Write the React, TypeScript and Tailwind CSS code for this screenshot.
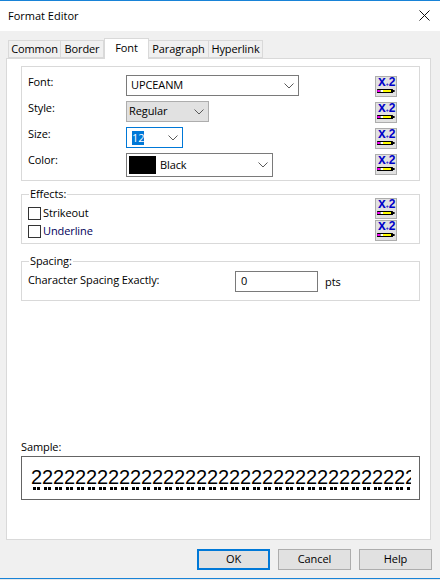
const F = "font-['Open_Sans','Noto_Sans',sans-serif]";

function Chevron() {
  return (
    <svg width="10" height="6" viewBox="0 0 10 6" fill="none" className="shrink-0">
      <path d="M0.5 0.5L5 5L9.5 0.5" stroke="#5a5a5a" strokeWidth="1" />
    </svg>
  );
}

function XBtn() {
  return (
    <div className="w-[22px] h-[21px] border border-[#adadad] bg-[#e1e1e1] shrink-0 flex flex-col">
      <div className="h-[11px] pl-[2px] flex items-baseline font-['Liberation_Sans',sans-serif] font-bold text-[#0000c8] leading-[9px] tracking-normal">
        <span className="text-[14px]">x</span>
        <span className="text-[5px]">+</span>
        <span className="text-[12px]">2</span>
      </div>
      <svg width="20" height="8" viewBox="0 11 20 8" className="shrink-0">
        <rect x="1" y="12" width="16" height="4" rx="0.5" fill="#000" />
        <rect x="1.3" y="13" width="2.6" height="2" fill="#ff00ff" />
        <rect x="4.4" y="13" width="2.6" height="2" fill="#ffffff" />
        <rect x="7" y="13" width="8" height="2" fill="#ffff00" />
        <rect x="17" y="13" width="1.6" height="2" fill="#000" />
      </svg>
    </div>
  );
}

function Row({ label, children }: { label: string; children: React.ReactNode }) {
  return (
    <div className="flex items-start h-[26px]">
      <div className="w-[98px] leading-[14px]">{label}</div>
      <div className="flex-1">{children}</div>
      <div className="w-[22px] mr-[22px] mt-[1px]"><XBtn /></div>
    </div>
  );
}

export default function App() {
  return (
    <div className={`${F} w-[440px] h-[580px] overflow-hidden bg-[#e8e8e8] flex flex-col text-black text-[11px] tracking-[-0.1px]`}>
      <div className="h-[31px] bg-white border-t border-[#1883d7] flex items-center justify-between pl-[8px] pr-[4px] shrink-0">
        <span className="tracking-normal">Format Editor</span>
        <svg width="20" height="20" viewBox="0 0 20 20" fill="none" className="mr-[1px]">
          <path d="M4.5 4.5L14.5 14.5M14.5 4.5L4.5 14.5" stroke="#111" strokeWidth="1" />
        </svg>
      </div>

      <div className="flex-1 flex flex-col bg-[#f0f0f0] border-b border-[#1883d7] mb-[1px] pl-[6px]">
        <div className="flex items-end h-[27px] pl-[2px] relative z-10 shrink-0">
          <div className="h-[18px] w-[53px] border border-[#d9d9d9] bg-[#f0f0f0] flex items-center justify-center">Common</div>
          <div className="h-[18px] w-[43px] border border-l-0 border-[#d9d9d9] bg-[#f0f0f0] flex items-center justify-center">Border</div>
          <div className="h-[21px] w-[45px] border border-b-0 border-[#d9d9d9] bg-white flex items-center justify-center pb-[1px] mb-[-1px]">Font</div>
          <div className="h-[18px] w-[60px] border border-l-0 border-[#d9d9d9] bg-[#f0f0f0] flex items-center justify-center">Paragraph</div>
          <div className="h-[18px] w-[54px] border border-l-0 border-[#d9d9d9] bg-[#f0f0f0] flex items-center justify-center">Hyperlink</div>
        </div>

        <div className="w-[425px] h-[482px] bg-white border border-[#d9d9d9] pl-[14px] pt-[7px] flex flex-col shrink-0">
          <div className="w-[399px] h-[115px] border border-[#d9d9d9] pl-[6px] pt-[8px] flex flex-col shrink-0">
            <Row label="Font:">
              <div className="w-[173px] h-[21px] border border-[#7a7a7a] flex items-center justify-between pl-[4px] pr-[4px]">
                <span>UPCEANM</span><Chevron />
              </div>
            </Row>
            <Row label="Style:">
              <div className="w-[83px] h-[21px] border border-[#adadad] bg-[#e1e1e1] flex items-center justify-between pl-[2px] pr-[4px]">
                <span>Regular</span><Chevron />
              </div>
            </Row>
            <Row label="Size:">
              <div className="w-[57px] h-[21px] border border-[#0078d7] flex items-center justify-between pl-[5px] pr-[4px]">
                <span className="bg-[#0078d7] text-white leading-[14px]">12</span><Chevron />
              </div>
            </Row>
            <Row label="Color:">
              <div className="w-[147px] h-[24px] border border-[#7a7a7a] flex items-center justify-between pl-[2px] pr-[4px]">
                <span className="flex items-center gap-[4px]">
                  <span className="w-[27px] h-[18px] bg-black" />Black
                </span>
                <Chevron />
              </div>
            </Row>
          </div>

          <fieldset className="w-[399px] h-[57px] mt-[6px] border border-[#d9d9d9] pl-[6px] shrink-0 flex flex-col">
            <legend className="ml-[1px] px-[1px] leading-[14px]">Effects:</legend>
            <div className="flex">
              <div className="flex-1 flex flex-col pt-[6px] gap-[5px]">
                <label className="flex items-center gap-[2px] h-[13px]"><span className="w-[13px] h-[13px] border border-[#333] bg-white" />Strikeout</label>
                <label className="flex items-center gap-[2px] h-[13px]"><span className="w-[13px] h-[13px] border border-[#333] bg-white" /><span className="text-[#00005a]">Underline</span></label>
              </div>
              <div className="flex flex-col gap-[1px] mr-[22px] mt-[-3px]"><XBtn /><XBtn /></div>
            </div>
          </fieldset>

          <fieldset className="w-[399px] h-[47px] mt-[10px] border border-[#d9d9d9] pl-[6px] shrink-0 flex flex-col">
            <legend className="ml-[1px] px-[1px] leading-[14px]">Spacing:</legend>
            <div className="flex items-start pt-[3px]">
              <span className="w-[207px] pt-[1px] leading-[16px]">Character Spacing Exactly:</span>
              <div className="w-[83px] h-[21px] border border-[#7a7a7a] pl-[5px] leading-[18px]">0</div>
              <span className="ml-[7px] pt-[3px] leading-[16px]">pts</span>
            </div>
          </fieldset>

          <div className="flex-1" />
          <div className="leading-[16px] mb-[1px]">Sample:</div>
          <div className="w-[399px] h-[44px] border border-[#646464] mb-[39px] pl-[9px] pr-[8px] shrink-0">
            <div className="overflow-hidden h-[42px] pt-[9px]">
              <div className="font-['Liberation_Sans',sans-serif] text-[20px] leading-[22px] whitespace-nowrap tracking-[-0.12px] h-[21px]">
                2222222222222222222222222222222222222222
              </div>
              <div className="h-[3px] ml-[2px] bg-[repeating-linear-gradient(90deg,#000_0,#000_3px,transparent_3px,transparent_4px,#000_4px,#000_7px,transparent_7px,transparent_11px)]" />
            </div>
          </div>
        </div>

        <div className="flex justify-end gap-[8px] pr-[8px] pt-[9px]">
          <button className="w-[73px] h-[21px] border-2 border-[#0078d7] bg-[#e1e1e1]">OK</button>
          <button className="w-[73px] h-[21px] border border-[#adadad] bg-[#e1e1e1]">Cancel</button>
          <button className="w-[73px] h-[21px] border border-[#adadad] bg-[#e1e1e1]">Help</button>
        </div>
      </div>
    </div>
  );
}
